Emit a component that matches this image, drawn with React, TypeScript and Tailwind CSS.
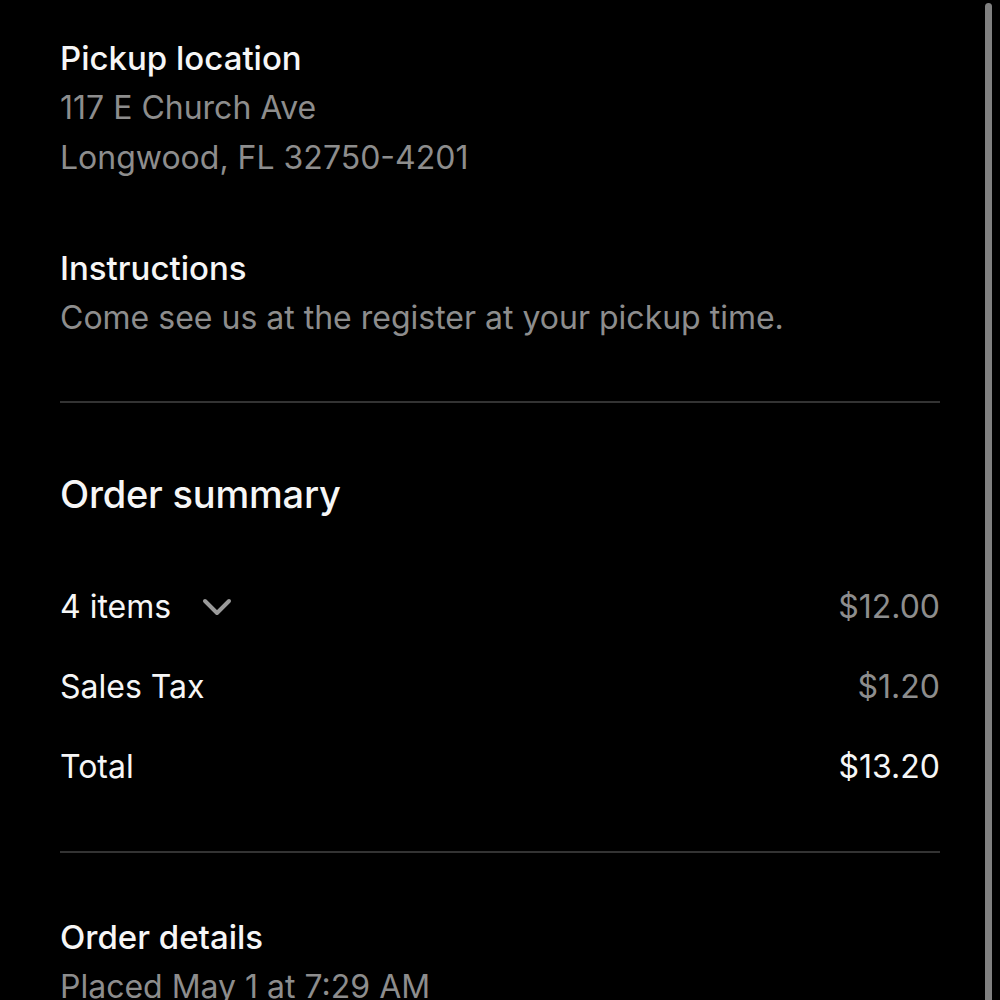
import { ChevronDown } from 'lucide-react';

type Line = { label: string; value: string; strong?: boolean; expandable?: boolean };

const summary: Line[] = [
  { label: '4 items', value: '$12.00', expandable: true },
  { label: 'Sales Tax', value: '$1.20' },
  { label: 'Total', value: '$13.20', strong: true },
];

export default function App() {
  return (
    <div
      className="relative h-[1000px] w-full overflow-hidden bg-black text-[#f6f6f6]"
      style={{ fontFamily: 'Inter, "Noto Sans", sans-serif' }}
    >
      <div className="px-[60px] pt-[33px]">
        <section>
          <h2 className="text-[33px] font-medium leading-[50px]">Pickup location</h2>
          <p className="text-[32px] leading-[50px] text-[#8d8d8d]">117 E Church Ave</p>
          <p className="text-[32px] leading-[50px] text-[#8d8d8d]">Longwood, FL 32750-4201</p>
        </section>

        <section className="mt-[60px]">
          <h2 className="text-[33px] font-medium leading-[50px]">Instructions</h2>
          <p className="text-[32px] leading-[50px] text-[#8d8d8d]">
            Come see us at the register at your pickup time.
          </p>
        </section>

        <div className="mt-[58px] h-[2px] bg-[#333333]" />

        <section className="mt-[66px]">
          <h2 className="text-[38px] font-medium leading-[50px] tracking-[-0.2px]">Order summary</h2>
          <div className="mt-[63px] flex flex-col gap-[30px]">
            {summary.map((line) => (
              <div key={line.label} className="flex items-center justify-between text-[32px] leading-[50px]">
                <div className="flex items-center">
                  <span>{line.label}</span>
                  {line.expandable ? (
                    <ChevronDown className="ml-[22px] h-[48px] w-[48px] text-[#9a9a9a]" strokeWidth={2} />
                  ) : null}
                </div>
                <span className={line.strong ? 'text-[#f6f6f6]' : 'text-[#8d8d8d]'}>{line.value}</span>
              </div>
            ))}
          </div>
        </section>

        <div className="mt-[59px] h-[2px] bg-[#333333]" />

        <section className="mt-[59px]">
          <h2 className="text-[33px] font-medium leading-[50px]">Order details</h2>
          <p className="text-[32px] leading-[50px] text-[#8d8d8d]">Placed May 1 at 7:29 AM</p>
        </section>
      </div>

      <div className="absolute right-[8px] top-[3px] h-[1000px] w-[7px] rounded-t-full bg-[#808080]" />
    </div>
  );
}
